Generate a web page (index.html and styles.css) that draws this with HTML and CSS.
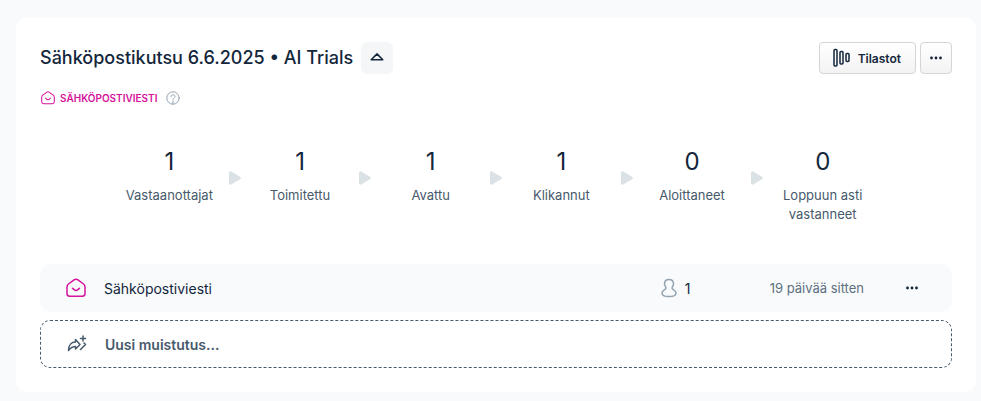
FILE: index.html
```html
<!DOCTYPE html>
<html lang="fi">
<head>
    <meta charset="UTF-8">
    <meta name="viewport" content="width=device-width, initial-scale=1.0">
    <title>Sähköpostikutsu</title>
    <link rel="stylesheet" href="styles.css">
</head>
<body>
    <!-- icons used more than once -->
    <svg class="sprite" aria-hidden="true">
        <symbol id="icon-mail" viewBox="0 0 20 20">
            <path d="M1 9c0-1.200.5-2.200 1.500-3l5.500-4.100c1.200-.9 2.800-.9 4 0L17.500 6c1 .8 1.500 1.800 1.500 3v6.500c0 1.700-1.100 2.800-2.800 2.800H3.800C2.100 18.300 1 17.200 1 15.500z"/>
            <path d="M6.500 10.200c1 1 2.200 2.300 3.500 2.300s2.500-1.300 3.500-2.300"/>
        </symbol>
        <symbol id="icon-dots" viewBox="0 0 14 4">
            <circle cx="2.500" cy="2" r="1.400"/>
            <circle cx="7" cy="2" r="1.400"/>
            <circle cx="11.500" cy="2" r="1.400"/>
        </symbol>
        <symbol id="icon-arrow" viewBox="0 0 12 14">
            <path d="M1.500 1.800v10.400L10.300 7z"/>
        </symbol>
    </svg>

    <main class="card">
        <header class="card-header">
            <h1>Sähköpostikutsu 6.6.2025 • AI Trials</h1>
            <button type="button" class="btn-toggle" aria-label="Piilota">
                <svg width="14" height="10" viewBox="0 0 14 10"><path d="M1.200 7.700L7 1.900l5.800 5.800z"/></svg>
            </button>
            <div class="actions">
                <button type="button" class="btn">
                    <svg class="icon-stats" width="18" height="20" viewBox="0 0 18 20">
                        <rect x="1" y="1.500" width="3" height="16.500" rx="1"/>
                        <rect x="7" y="3.500" width="3" height="12.500" rx="1"/>
                        <rect x="13" y="5.500" width="3" height="8" rx="1"/>
                    </svg>
                    Tilastot
                </button>
                <button type="button" class="btn btn-more" aria-label="Lisää">
                    <svg class="dots"><use href="#icon-dots"/></svg>
                </button>
            </div>
        </header>

        <div class="type">
            <svg class="icon-mail small"><use href="#icon-mail"/></svg>
            <span>SÄHKÖPOSTIVIESTI</span>
            <svg class="icon-help" width="14" height="14" viewBox="0 0 14 14">
                <circle cx="7" cy="7" r="6.200"/>
                <path d="M5 5.600C5 4.400 5.900 3.800 7 3.800s2 .7 2 1.700c0 1.300-2 1.400-2 2.900M7 10v3"/>
            </svg>
        </div>

        <section class="stats">
            <div class="stat"><strong>1</strong><span>Vastaanottajat</span></div>
            <svg class="arrow"><use href="#icon-arrow"/></svg>
            <div class="stat"><strong>1</strong><span>Toimitettu</span></div>
            <svg class="arrow"><use href="#icon-arrow"/></svg>
            <div class="stat"><strong>1</strong><span>Avattu</span></div>
            <svg class="arrow"><use href="#icon-arrow"/></svg>
            <div class="stat"><strong>1</strong><span>Klikannut</span></div>
            <svg class="arrow"><use href="#icon-arrow"/></svg>
            <div class="stat"><strong>0</strong><span>Aloittaneet</span></div>
            <svg class="arrow"><use href="#icon-arrow"/></svg>
            <div class="stat"><strong>0</strong><span>Loppuun asti vastanneet</span></div>
        </section>

        <div class="row">
            <svg class="icon-mail"><use href="#icon-mail"/></svg>
            <span class="row-name">Sähköpostiviesti</span>
            <span class="count">
                <svg class="icon-person" width="16" height="20" viewBox="0 0 16 20">
                    <path d="M8 1.500c2.700 0 4.500 1.900 4.500 4.400 0 1.900-1.500 2.700-1.500 4.100 0 2 4 1.800 4 4.900 0 2.400-3.400 3.600-7 3.600s-7-1.200-7-3.600C1 11.800 5 12 5 10c0-1.400-1.500-2.200-1.500-4.100C3.500 3.400 5.300 1.500 8 1.500z"/>
                </svg>
                1
            </span>
            <time>19 päivää sitten</time>
            <button type="button" class="btn-plain" aria-label="Lisää">
                <svg class="dots"><use href="#icon-dots"/></svg>
            </button>
        </div>

        <button type="button" class="row row-new">
            <svg class="icon-remind" width="20" height="18" viewBox="0 0 20 18">
                <path d="M1.500 15.500C1.500 10 4.500 7 8.500 7V4.500L13 9.500l-4.500 4.500V11.500c-3 0-5 1.500-7 4z"/>
                <path d="M13.500 14.500l5-5-1.500-1.500M16 1v5M13.500 3.500h5"/>
            </svg>
            Uusi muistutus...
        </button>
    </main>
</body>
</html>
```
FILE: styles.css
```css
* {
    box-sizing: border-box;
}

body {
    margin: 0;
    padding: 18px 5px 9px 16px;
    font-family: Inter, "Liberation Sans", sans-serif;
    font-size: 14px;
    color: #13263b;
    background-color: #f8fafc;
}

svg {
    flex: none;
    fill: none;
    stroke: currentColor;
    stroke-width: 1.5;
    stroke-linecap: round;
    stroke-linejoin: round;
}

.sprite {
    display: none;
}

button {
    padding: 0;
    border: none;
    color: inherit;
    font-family: inherit;
    cursor: pointer;
}

.card {
    padding: 24px;
    background-color: #fff;
    border-radius: 10px;
}

.card-header {
    display: flex;
    align-items: center;
    gap: 8px;
    height: 32px;
}

h1 {
    margin: 0;
    font-size: 18px;
    font-weight: 500;
    line-height: 20px;
}

.btn-toggle {
    display: flex;
    align-items: center;
    justify-content: center;
    width: 32px;
    height: 32px;
    padding-bottom: 2px;
    background-color: #f4f6f7;
    border-radius: 6px;
}

.actions {
    display: flex;
    gap: 4px;
    margin-left: auto;
}

.btn {
    display: flex;
    align-items: center;
    justify-content: center;
    gap: 7px;
    height: 32px;
    padding: 0 14px 0 13px;
    border: 1px solid #d5d5d5;
    border-radius: 4px;
    background: linear-gradient(#fff, #f3f3f3);
    font-size: 12px;
    font-weight: 600;
}

.btn-more {
    width: 32px;
    padding: 0;
}

.dots {
    width: 14px;
    height: 4px;
    fill: currentColor;
    stroke: none;
}

.type {
    display: flex;
    align-items: center;
    height: 16px;
    margin-top: 16px;
    color: #d6139b;
    font-size: 10px;
    font-weight: 600;
}

.icon-mail {
    width: 20px;
    height: 20px;
    color: #d6139b;
}

.icon-mail.small {
    width: 14px;
    height: 14px;
    margin: 0 5px 0 1px;
}

.icon-help {
    margin-left: 9px;
    color: #94a3b0;
    stroke-width: 1;
}

/* funnel numbers */
.stats {
    display: flex;
    min-height: 118px;
    margin-top: 40px;
    padding: 0 64px;
}

.stat {
    flex: 1;
    padding: 0 24px;
    text-align: center;
}

.stat strong {
    display: block;
    font-size: 24px;
    font-weight: 400;
    line-height: 32px;
}

.stat span {
    display: block;
    margin: 8px -10px 0;
    color: #475a6c;
    font-size: 13px;
    line-height: 19px;
}

.arrow {
    width: 12px;
    height: 14px;
    margin: 25px -6px 0;
    color: #dbe2e6;
    fill: currentColor;
    stroke-width: 3;
}

.row {
    display: flex;
    align-items: center;
    width: 100%;
    height: 48px;
    padding: 0 33px 0 26px;
    background-color: #f8fafc;
    border-radius: 10px;
}

.row-name {
    flex: 1;
    margin-left: 18px;
}

.count {
    display: flex;
    align-items: center;
    gap: 8px;
    width: 109px;
}

.icon-person {
    color: #94a3b0;
}

time {
    color: #5d7080;
    font-size: 13px;
}

.btn-plain {
    display: flex;
    margin-left: 41px;
    background: none;
}

.row-new {
    gap: 18px;
    margin-top: 8px;
    border: 1px dashed #475a6c;
    background: none;
    color: #475a6c;
    font-size: 14px;
    font-weight: 600;
}
```
